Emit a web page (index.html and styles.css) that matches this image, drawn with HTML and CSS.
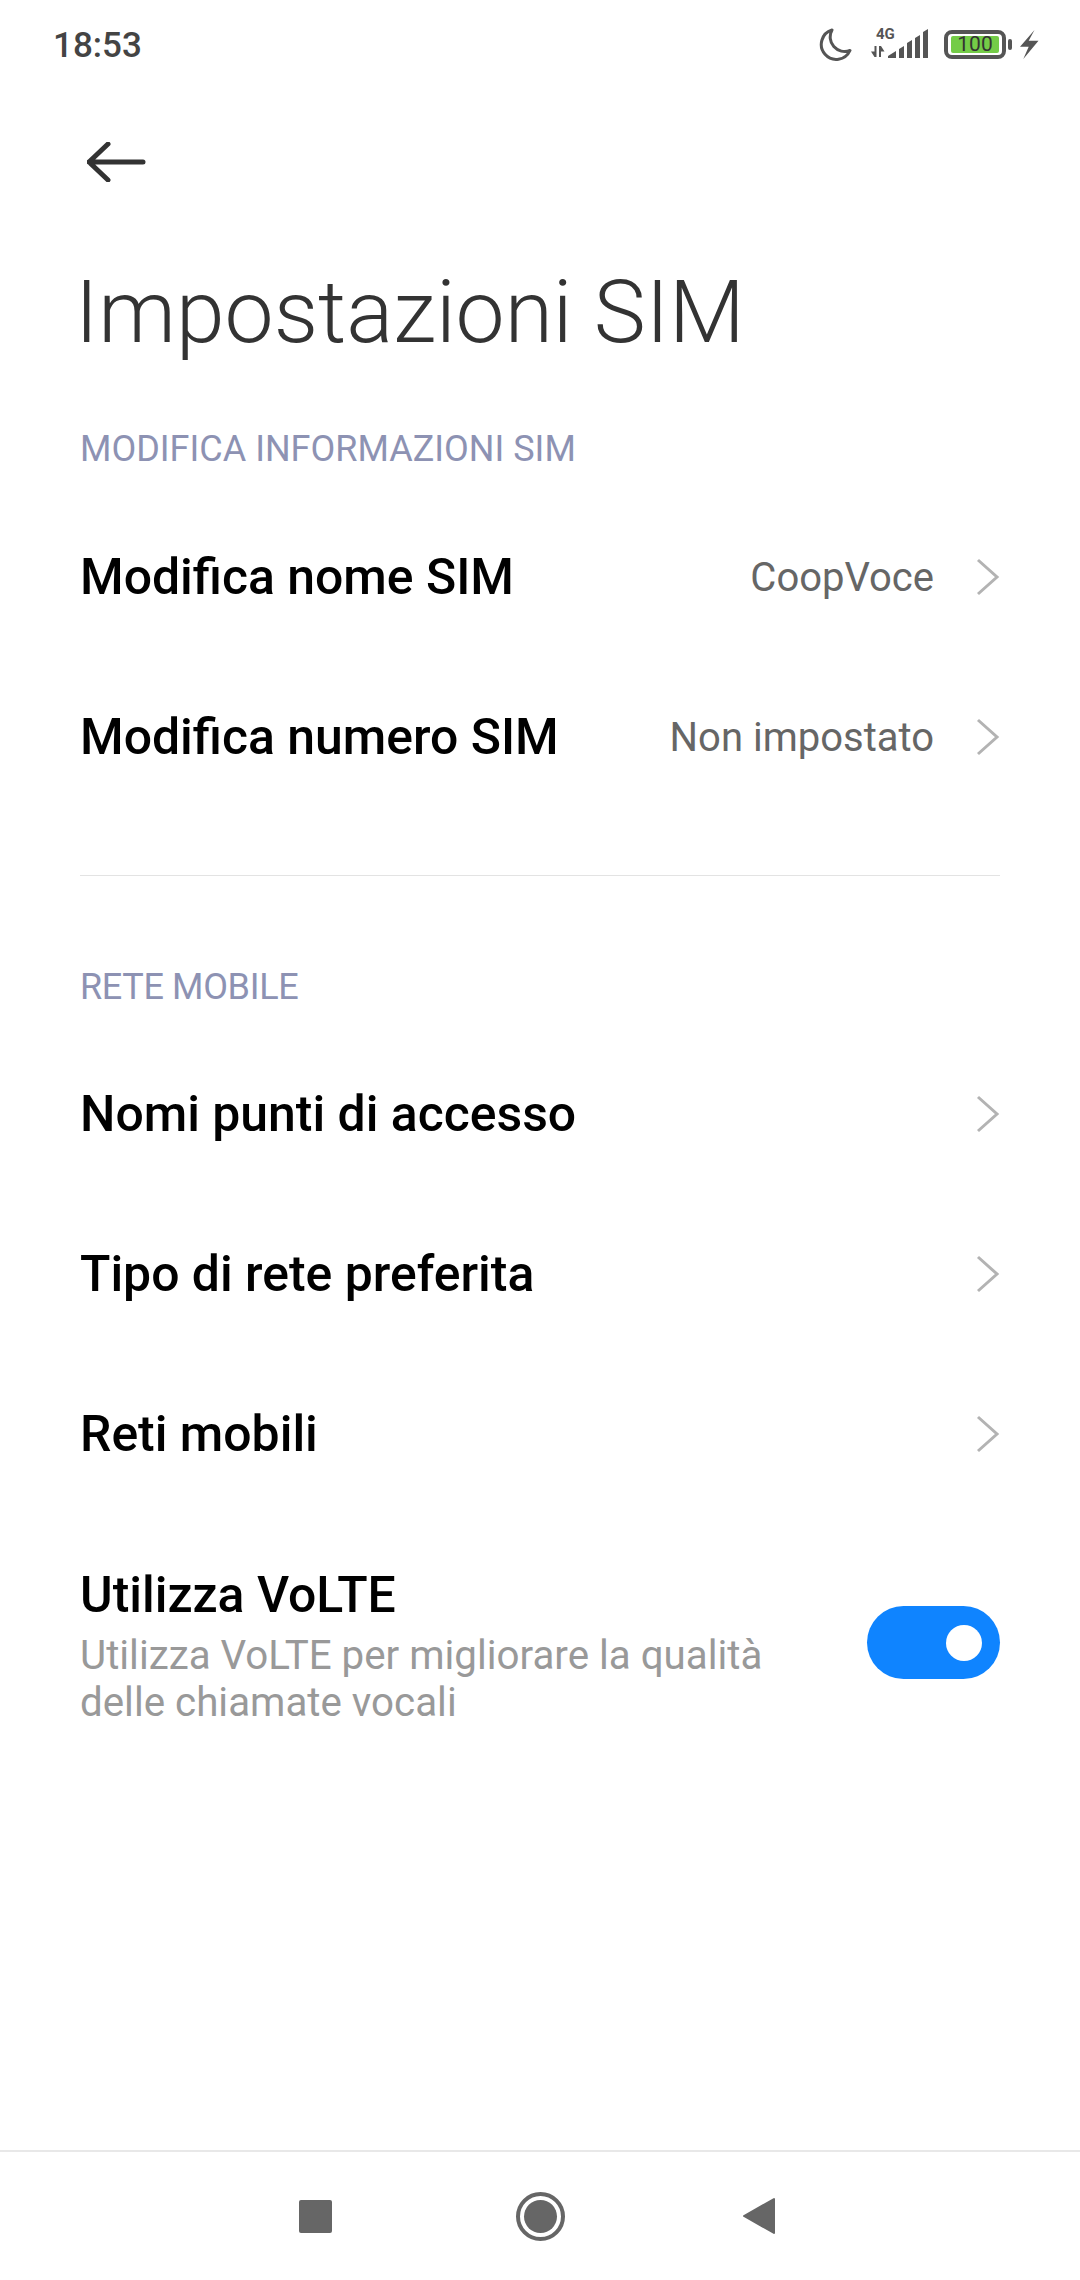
FILE: index.html
```html
<!DOCTYPE html>
<html lang="it">
<head>
    <meta charset="UTF-8">
    <title>Impostazioni SIM</title>
    <link rel="stylesheet" href="styles.css">
</head>
<body>
    <div class="screen">
        <div class="status-bar">
            <span class="clock">18:53</span>
            <div class="status-icons">
                <svg class="icon-moon" width="33" height="33" viewBox="0 0 33 33"><path d="M13 2A15 15 0 1 0 31 22.500A14.500 14.500 0 0 1 13 2Z" fill="none" stroke="#555" stroke-width="3" stroke-linejoin="round"/></svg>
                <div class="signal">
                    <span class="signal-label">4G</span>
                    <svg width="57" height="30" viewBox="0 0 57 30"><path d="M3.500 17H5.500V28H3.500L0 22.500H3.500ZM8 17H10L13.500 22.500H10V28H8Z" fill="#555"/><path d="M17 29V27L25 22V29ZM28 29V20L33 17V29ZM36 29V14L41 11V29ZM44 29V9L49 6V29ZM52 29V3L57 0V29Z" fill="#555"/></svg>
                </div>
                <div class="battery">
                    <div class="battery-body"><span class="battery-level">100</span></div>
                    <div class="battery-tip"></div>
                </div>
                <svg class="icon-bolt" width="19" height="29" viewBox="0 0 19 29"><path d="M14.500 0L0 16.700H8.700L3.300 29L18.500 10.700H8.700Z" fill="#555"/></svg>
            </div>
        </div>

        <div class="back">
            <svg width="60" height="40" viewBox="0 0 60 40"><path d="M2 20H56M21 2L2 20L21 38" fill="none" stroke="#333" stroke-width="5" stroke-linecap="round" stroke-linejoin="round"/></svg>
        </div>

        <h1 class="page-title">Impostazioni SIM</h1>

        <div class="section">
            <h2 class="section-title">MODIFICA INFORMAZIONI SIM</h2>
            <div class="row">
                <span class="row-title">Modifica nome SIM</span>
                <span class="row-value">CoopVoce</span>
                <svg class="chevron" width="24" height="38" viewBox="0 0 24 38"><path d="M2 2L21 19L2 36" fill="none" stroke="#b3b3b3" stroke-width="3"/></svg>
            </div>
            <div class="row">
                <span class="row-title">Modifica numero SIM</span>
                <span class="row-value">Non impostato</span>
                <svg class="chevron" width="24" height="38" viewBox="0 0 24 38"><path d="M2 2L21 19L2 36" fill="none" stroke="#b3b3b3" stroke-width="3"/></svg>
            </div>
        </div>

        <div class="divider"></div>

        <div class="section section-mobile">
            <h2 class="section-title">RETE MOBILE</h2>
            <div class="row">
                <span class="row-title">Nomi punti di accesso</span>
                <svg class="chevron" width="24" height="38" viewBox="0 0 24 38"><path d="M2 2L21 19L2 36" fill="none" stroke="#b3b3b3" stroke-width="3"/></svg>
            </div>
            <div class="row">
                <span class="row-title">Tipo di rete preferita</span>
                <svg class="chevron" width="24" height="38" viewBox="0 0 24 38"><path d="M2 2L21 19L2 36" fill="none" stroke="#b3b3b3" stroke-width="3"/></svg>
            </div>
            <div class="row">
                <span class="row-title">Reti mobili</span>
                <svg class="chevron" width="24" height="38" viewBox="0 0 24 38"><path d="M2 2L21 19L2 36" fill="none" stroke="#b3b3b3" stroke-width="3"/></svg>
            </div>
            <div class="row-toggle">
                <div class="toggle-text">
                    <div class="row-title">Utilizza VoLTE</div>
                    <div class="row-desc">Utilizza VoLTE per migliorare la qualità delle chiamate vocali</div>
                </div>
                <div class="toggle"><div class="toggle-knob"></div></div>
            </div>
        </div>

        <div class="nav-bar">
            <div class="nav-square"></div>
            <div class="nav-home"><div class="nav-home-dot"></div></div>
            <svg class="nav-back" width="33" height="38" viewBox="0 0 33 38"><path d="M32 2V36L2 19Z" fill="#666" stroke="#666" stroke-width="2" stroke-linejoin="round"/></svg>
        </div>
    </div>
</body>
</html>
```
FILE: styles.css
```css
html, body {
    margin: 0;
    padding: 0;
    background: #fff;
    font-family: Roboto, sans-serif;
}
.screen {
    width: 1080px;
    height: 2280px;
    display: flex;
    flex-direction: column;
    overflow: hidden;
}

.status-bar {
    height: 88px;
    padding: 0 41px 0 53px;
    display: flex;
    align-items: center;
    justify-content: space-between;
}
.clock {
    margin-top: 3px;
    font-size: 35px;
    font-weight: 500;
    color: #444;
}
.status-icons {
    display: flex;
    align-items: center;
}
.icon-moon {
    margin-right: 19px;
}
.signal {
    position: relative;
    width: 57px;
    height: 30px;
    margin-right: 16px;
}
.signal svg {
    display: block;
}
.signal-label {
    position: absolute;
    left: 5px;
    top: -3px;
    font-size: 15px;
    line-height: 16px;
    font-weight: 700;
    color: #555;
}
.battery {
    display: flex;
    align-items: center;
    gap: 2px;
}
.battery-body {
    width: 48px;
    height: 17px;
    border: 4px solid #555;
    border-radius: 8px;
    padding: 2px 3px;
    display: flex;
}
.battery-level {
    flex: 1;
    background: #74cc47;
    border-radius: 2px;
    color: #333;
    font-size: 21px;
    line-height: 17px;
    text-align: center;
}
.battery-tip {
    width: 4px;
    height: 11px;
    background: #555;
    border-radius: 2px;
}
.icon-bolt {
    margin-left: 8px;
}

.back {
    height: 40px;
    margin: 54px 0 0 87px;
}
.page-title {
    margin: 77px 0 0 75px;
    font-size: 87.6px;
    line-height: 106px;
    font-weight: 300;
    color: #333;
}

.section {
    margin-top: 64px;
    padding: 0 80px;
}
.section-title {
    margin: 0;
    font-size: 36px;
    line-height: 40px;
    font-weight: 400;
    color: #8d92b3;
}
.section-mobile .section-title {
    letter-spacing: -0.35px;
    padding-top: 1px;
}
.section .row:first-of-type {
    margin-top: 28px;
}
.section-mobile .row:first-of-type {
    margin-top: 27px;
}
.row {
    height: 160px;
    display: flex;
    align-items: center;
}
.row-title {
    font-size: 49.9px;
    font-weight: 500;
    color: #000;
}
.row-value {
    margin-left: auto;
    font-size: 40px;
    color: #666;
}
.chevron {
    margin-left: 42px;
}
.row .row-title + .chevron {
    margin-left: auto;
}

.divider {
    height: 1px;
    background: #e3e3e3;
    margin: 58px 80px 0;
}
.section-mobile {
    margin-top: 90px;
}

.row-toggle {
    display: flex;
    align-items: center;
    justify-content: space-between;
    padding-top: 52px;
}
.toggle-text {
    width: 720px;
}
.row-desc {
    font-size: 40.3px;
    line-height: 47px;
    color: #999;
    margin-top: 8px;
}
.toggle {
    width: 133px;
    height: 73px;
    margin-bottom: 7px;
    border-radius: 37px;
    background: #0f84ff;
    display: flex;
    align-items: center;
    justify-content: flex-end;
    padding-right: 18px;
    box-sizing: border-box;
}
.toggle-knob {
    width: 36px;
    height: 36px;
    border-radius: 50%;
    background: #fff;
}

.nav-bar {
    margin-top: auto;
    height: 130px;
    box-sizing: border-box;
    border-top: 2px solid #e8e8e8;
    display: flex;
    align-items: center;
    padding-left: 299px;
}
.nav-square {
    width: 33px;
    height: 33px;
    background: #666;
    border-radius: 2px;
}
.nav-home {
    width: 49px;
    height: 49px;
    margin-left: 184px;
    border: 4px solid #666;
    border-radius: 50%;
    box-sizing: border-box;
    display: flex;
    align-items: center;
    justify-content: center;
}
.nav-home-dot {
    width: 33px;
    height: 33px;
    border-radius: 50%;
    background: #666;
}
.nav-back {
    margin-left: 177px;
}
```
